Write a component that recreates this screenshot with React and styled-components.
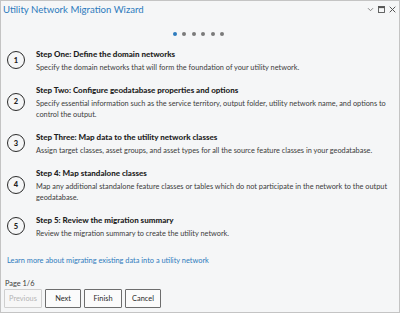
import React from "react";
import styled, { createGlobalStyle } from "styled-components";

const Global = createGlobalStyle`
  html, body { margin: 0; padding: 0; background: #f5f6f7; }
  body { font-family: Lato, "Open Sans", sans-serif; }
`;

const Window = styled.div`
  box-sizing: border-box;
  width: 400px;
  height: 313px;
  border: 1px solid #c4c4c4;
  background: #f5f6f7;
  display: flex;
  flex-direction: column;
  color: #3a3a3a;
`;

const TitleBar = styled.div`
  display: flex;
  align-items: center;
  justify-content: space-between;
  height: 16px;
  padding: 0 3px 0 2px;
`;

const Title = styled.div`
  font-size: 9.6px;
  color: #2d7bbd;
`;

const WinButtons = styled.div`
  display: flex;
  align-items: center;
  gap: 4px;
`;

const Dots = styled.div`
  display: flex;
  justify-content: center;
  gap: 5.5px;
  margin-top: 15px;
  padding-right: 3px;
`;

const Dot = styled.span`
  width: 4px;
  height: 4px;
  border-radius: 50%;
  background: ${(p) => (p.$active ? "#2d7bbd" : "#7a7a7a")};
`;

const Steps = styled.div`
  display: flex;
  flex-direction: column;
  gap: 11.5px;
  margin-top: 12px;
  padding: 0 6px;
`;

const Step = styled.div`
  display: grid;
  grid-template-columns: 29px 1fr;
  align-items: center;
`;

const Circle = styled.div`
  width: 16px;
  height: 16px;
  border: 1.3px solid #2a2a2a;
  border-radius: 50%;
  display: flex;
  align-items: center;
  justify-content: center;
  font-size: 7.5px;
  font-weight: 900;
  color: #222;
`;

const StepBody = styled.div`
  display: flex;
  flex-direction: column;
  gap: 1.5px;
  padding-right: 4px;
`;

const StepTitle = styled.div`
  font-size: 8px;
  font-weight: 900;
  color: #1e1e1e;
  line-height: 12px;
`;

const StepDesc = styled.div`
  font-size: 7.35px;
  line-height: 11px;
  color: #3c3c3c;
`;

const Link = styled.a`
  font-size: 7.4px;
  line-height: 11px;
  color: #2d7bbd;
  text-decoration: none;
  margin: 16px 0 0 6px;
`;

const PageLabel = styled.div`
  font-size: 7.4px;
  line-height: 11px;
  color: #3c3c3c;
  margin: 12px 0 0 4px;
`;

const Footer = styled.div`
  display: flex;
  gap: 3px;
  margin: 0 0 0 3px;
`;

const Button = styled.button`
  box-sizing: border-box;
  height: 19px;
  width: ${(p) => p.$w}px;
  border: 1px solid ${(p) => (p.disabled ? "#cfcfcf" : "#6d6d6d")};
  background: ${(p) => (p.disabled ? "#f7f7f7" : "#fbfbfb")};
  color: ${(p) => (p.disabled ? "#b5b5b5" : "#2a2a2a")};
  font-family: Lato, sans-serif;
  font-size: 7.4px;
  padding: 0;
  border-radius: 1px;
`;

const steps = [
  {
    n: 1,
    title: "Step One: Define the domain networks",
    desc: "Specify the domain networks that will form the foundation of your utility network.",
  },
  {
    n: 2,
    title: "Step Two: Configure geodatabase properties and options",
    desc: "Specify essential information such as the service territory, output folder, utility network name, and options to control the output.",
  },
  {
    n: 3,
    title: "Step Three: Map data to the utility network classes",
    desc: "Assign target classes, asset groups, and asset types for all the source feature classes in your geodatabase.",
  },
  {
    n: 4,
    title: "Step 4: Map standalone classes",
    desc: "Map any additional standalone feature classes or tables which do not participate in the network to the output geodatabase.",
  },
  {
    n: 5,
    title: "Step 5: Review the migration summary",
    desc: "Review the migration summary to create the utility network.",
  },
];

export default function App() {
  return (
    <>
      <Global />
      <Window>
        <TitleBar>
          <Title>Utility Network Migration Wizard</Title>
          <WinButtons>
            <svg width="7" height="7" viewBox="0 0 7 7">
              <path d="M1 2.2 L3.5 4.7 L6 2.2" fill="none" stroke="#777" strokeWidth="0.9" />
            </svg>
            <svg width="7" height="7" viewBox="0 0 7 7">
              <rect x="0.5" y="0.5" width="6" height="6" fill="none" stroke="#555" strokeWidth="0.9" />
              <rect x="0.5" y="0.5" width="6" height="1.6" fill="#555" />
            </svg>
            <svg width="7" height="7" viewBox="0 0 7 7">
              <path d="M0.7 0.7 L6.3 6.3 M6.3 0.7 L0.7 6.3" fill="none" stroke="#555" strokeWidth="1" />
            </svg>
          </WinButtons>
        </TitleBar>
        <Dots>
          {[0, 1, 2, 3, 4, 5].map((i) => (
            <Dot key={i} $active={i === 0} />
          ))}
        </Dots>
        <Steps>
          {steps.map((s) => (
            <Step key={s.n}>
              <Circle>{s.n}</Circle>
              <StepBody>
                <StepTitle>{s.title}</StepTitle>
                <StepDesc>{s.desc}</StepDesc>
              </StepBody>
            </Step>
          ))}
        </Steps>
        <Link href="#">Learn more about migrating existing data into a utility network</Link>
        <PageLabel>Page 1/6</PageLabel>
        <Footer>
          <Button $w={38} disabled>Previous</Button>
          <Button $w={36}>Next</Button>
          <Button $w={38}>Finish</Button>
          <Button $w={36}>Cancel</Button>
        </Footer>
      </Window>
    </>
  );
}
